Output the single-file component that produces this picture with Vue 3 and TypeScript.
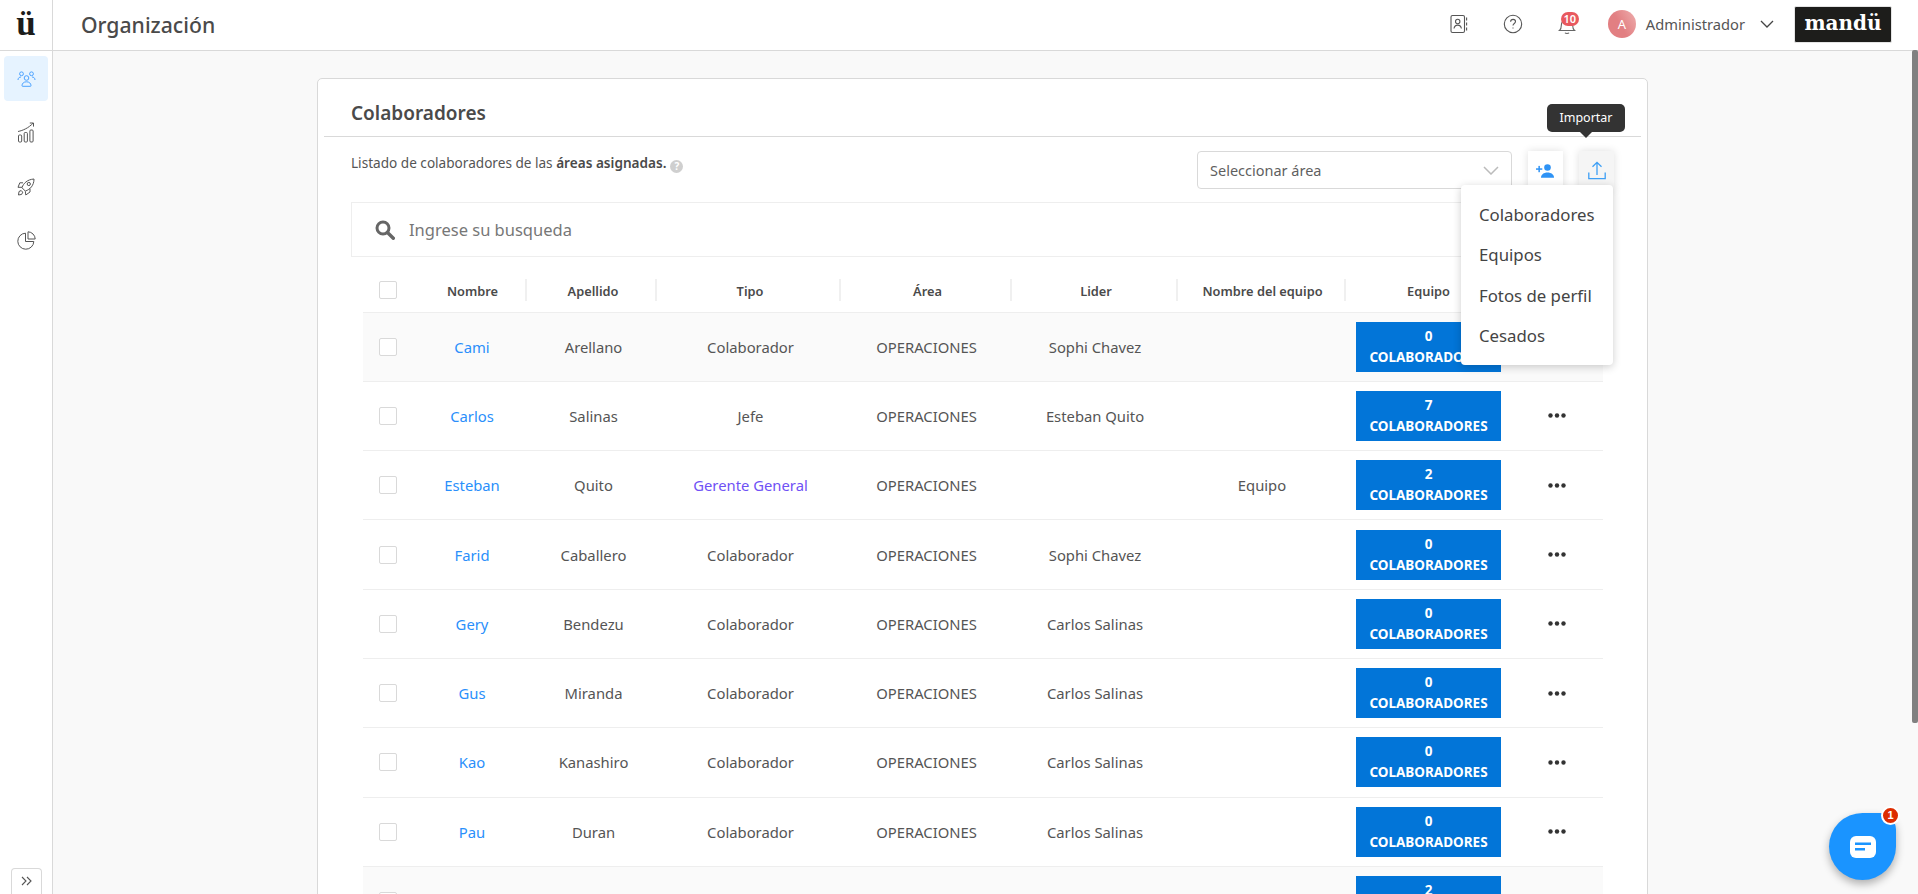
<script setup lang="ts">
interface Row {
  name: string
  last: string
  type: string
  area: string
  leader: string
  team: string
  count: number
  tinted?: boolean
}

const columns: string[] = ['Nombre', 'Apellido', 'Tipo', 'Área', 'Lider', 'Nombre del equipo', 'Equipo']
const menuItems: string[] = ['Colaboradores', 'Equipos', 'Fotos de perfil', 'Cesados']

const rows: Row[] = [
  { name: 'Cami', last: 'Arellano', type: 'Colaborador', area: 'OPERACIONES', leader: 'Sophi Chavez', team: '', count: 0, tinted: true },
  { name: 'Carlos', last: 'Salinas', type: 'Jefe', area: 'OPERACIONES', leader: 'Esteban Quito', team: '', count: 7 },
  { name: 'Esteban', last: 'Quito', type: 'Gerente General', area: 'OPERACIONES', leader: '', team: 'Equipo', count: 2 },
  { name: 'Farid', last: 'Caballero', type: 'Colaborador', area: 'OPERACIONES', leader: 'Sophi Chavez', team: '', count: 0 },
  { name: 'Gery', last: 'Bendezu', type: 'Colaborador', area: 'OPERACIONES', leader: 'Carlos Salinas', team: '', count: 0 },
  { name: 'Gus', last: 'Miranda', type: 'Colaborador', area: 'OPERACIONES', leader: 'Carlos Salinas', team: '', count: 0 },
  { name: 'Kao', last: 'Kanashiro', type: 'Colaborador', area: 'OPERACIONES', leader: 'Carlos Salinas', team: '', count: 0 },
  { name: 'Pau', last: 'Duran', type: 'Colaborador', area: 'OPERACIONES', leader: 'Carlos Salinas', team: '', count: 0 },
  { name: '', last: '', type: '', area: '', leader: '', team: '', count: 2, tinted: true },
]
</script>

<template>
  <div class="app">
    <header class="topbar">
      <div class="logo-cell"><span class="logo">ü</span></div>
      <h1 class="page-title">Organización</h1>
      <div class="top-actions">
        <svg class="ti book" viewBox="0 0 20 20" fill="none" stroke="#555" stroke-width="1.1">
          <rect x="2" y="1.5" width="13.5" height="17" rx="1.5" />
          <circle cx="8.7" cy="7.5" r="2.2" />
          <path d="M5 14.5c.4-2.6 2-3.4 3.7-3.4s3.3.8 3.7 3.4" />
          <path d="M17.6 3.5v3M17.6 8.5v3M17.6 13.5v3" />
        </svg>
        <svg class="ti help" viewBox="0 0 20 20" fill="none" stroke="#555" stroke-width="1.1">
          <circle cx="10" cy="10" r="8.7" />
          <path d="M7.6 7.8c0-1.5 1.1-2.4 2.5-2.4s2.4.9 2.4 2.2c0 1.9-2.5 1.9-2.5 4" />
          <path d="M10 13.4v1.2" />
        </svg>
        <div class="bell">
          <svg class="ti" viewBox="0 0 20 20" fill="none" stroke="#666" stroke-width="1.1">
            <path d="M2.5 15.5c1.3-1 1.8-2.3 1.8-5 0-3.400 2.400-6 5.700-6s5.700 2.600 5.700 6c0 2.700.5 4 1.800 5z" />
            <path d="M8 17.800c.6 1 3.400 1 4 0" />
          </svg>
          <span class="bell-count">10</span>
        </div>
        <div class="user">
          <span class="avatar">A</span>
          <span class="user-name">Administrador</span>
          <svg class="user-chev" viewBox="0 0 14 8" fill="none" stroke="#444" stroke-width="1.300">
            <path d="M1 1l6 6 6-6" />
          </svg>
        </div>
        <div class="brand">mandü</div>
      </div>
    </header>

    <div class="body">
      <aside class="sidebar">
        <nav class="side-nav">
          <a class="side-item active">
            <svg width="19" height="16" viewBox="0 0 19 16" fill="none" stroke="#4da3ff" stroke-width="1">
              <circle cx="4.500" cy="2.800" r="1.900" />
              <circle cx="14.500" cy="2.800" r="1.900" />
              <circle cx="9.500" cy="7" r="2.300" />
              <path d="M1 9c0-2 1.300-3 3-3M18 9c0-2-1.300-3-3-3" />
              <path d="M5 14.800c0-2.500 1.800-4 4.500-4s4.500 1.500 4.500 4c0 .3-.2.5-.5.5h-8c-.3 0-.5-.2-.5-.5z" />
            </svg>
          </a>
          <a class="side-item">
            <svg width="18" height="21" viewBox="0 0 18 21" fill="none" stroke="#555" stroke-width="1">
              <rect x="1.500" y="13" width="3.200" height="7" rx="1" />
              <rect x="7.200" y="10.500" width="3.200" height="9.500" rx="1" />
              <rect x="12.900" y="8" width="3.200" height="12" rx="1" />
              <path d="M1 9.500C6 8.500 11.500 6 16 1.200" />
              <path d="M12.800 1h3.700v3.600" />
            </svg>
          </a>
          <a class="side-item">
            <svg width="18" height="18" viewBox="0 0 18 18" fill="none" stroke="#555" stroke-width="1">
              <path d="M6.500 11.500L5 9.500c1.500-4 5-8 12-8.500 0 6.500-4 10.500-8.500 12z" />
              <circle cx="11.800" cy="6" r="1.600" />
              <path d="M6 4.800H2.800L1 9.300h4M13 10.500v3.500L8.800 17l-.5-3.700" />
              <path d="M1.500 17l.5-3.500 2.200-1 1.500 1.700-1 2.200z" />
            </svg>
          </a>
          <a class="side-item">
            <svg width="19" height="19" viewBox="0 0 19 19" fill="none" stroke="#555" stroke-width="1">
              <path d="M8.500 2.200a8 8 0 1 0 8.300 8.300H8.500z" />
              <path d="M11 .8a7.500 7.500 0 0 1 7.200 7.200H11z" />
            </svg>
          </a>
        </nav>
        <button class="collapse" type="button">
          <svg width="11" height="10" viewBox="0 0 11 10" fill="none" stroke="#555" stroke-width="1.100">
            <path d="M1 1l4 4-4 4M6 1l4 4-4 4" />
          </svg>
        </button>
      </aside>

      <main class="main">
        <section class="card">
          <div class="card-head"><h2>Colaboradores</h2></div>
          <div class="card-body">
            <div class="toolbar">
              <p class="intro">
                Listado de colaboradores de las <b>áreas asignadas.</b>
                <span class="q">?</span>
              </p>
              <div class="tools">
                <div class="select">
                  <span>Seleccionar área</span>
                  <svg width="16" height="9" viewBox="0 0 16 9" fill="none" stroke="#bbb" stroke-width="1.500">
                    <path d="M1 1l7 7 7-7" />
                  </svg>
                </div>
                <button class="tool" type="button">
                  <svg width="19" height="14" viewBox="0 0 19 14" fill="#2f93f5">
                    <circle cx="11.500" cy="3.500" r="3.300" />
                    <path d="M5 13.800c0-3 2.700-5.200 6.500-5.200s6.500 2.200 6.500 5.200z" />
                    <rect x="0" y="4.300" width="6.300" height="1.500" />
                    <rect x="2.400" y="1.900" width="1.500" height="6.300" />
                  </svg>
                </button>
                <div class="import">
                  <button class="tool pressed" type="button">
                    <svg width="18" height="19" viewBox="0 0 18 19" fill="none" stroke="#3e9ff5" stroke-width="1.300">
                      <path d="M9 14V1.500M4.500 5.800L9 1.300l4.500 4.500" />
                      <path d="M.8 11.500v6.200h16.400v-6.200" />
                    </svg>
                  </button>
                  <div class="tooltip">Importar</div>
                  <ul class="menu">
                    <li v-for="item in menuItems" :key="item">{{ item }}</li>
                  </ul>
                </div>
              </div>
            </div>

            <div class="search">
              <svg width="20" height="20" viewBox="0 0 20 20" fill="none" stroke="#666" stroke-width="3">
                <circle cx="8" cy="8" r="6" />
                <path d="M12.500 12.500l5.800 5.800" stroke-width="3.400" stroke-linecap="round" />
              </svg>
              <span>Ingrese su busqueda</span>
            </div>

            <div class="table">
              <div class="tr th-row">
                <div class="cell-check"><span class="check"></span></div>
                <div v-for="col in columns" :key="col" class="th">{{ col }}</div>
                <div></div>
              </div>
              <div v-for="(row, i) in rows" :key="i" class="tr" :class="{ tinted: row.tinted }">
                <div class="cell-check"><span class="check"></span></div>
                <div class="td link">{{ row.name }}</div>
                <div class="td shifted">{{ row.last }}</div>
                <div class="td shifted" :class="{ purple: row.type === 'Gerente General' }">{{ row.type }}</div>
                <div class="td">{{ row.area }}</div>
                <div class="td">{{ row.leader }}</div>
                <div class="td">{{ row.team }}</div>
                <div class="td">
                  <div class="count"><span>{{ row.count }}</span><span>COLABORADORES</span></div>
                </div>
                <div class="td">
                  <svg width="18" height="5" viewBox="0 0 18 5" fill="#333">
                    <circle cx="2.500" cy="2.500" r="2.200" />
                    <circle cx="9" cy="2.500" r="2.200" />
                    <circle cx="15.500" cy="2.500" r="2.200" />
                  </svg>
                </div>
              </div>
            </div>
          </div>
        </section>
      </main>
    </div>

    <div class="scroll-thumb"></div>

    <button class="chat" type="button">
      <svg width="26" height="22" viewBox="0 0 26 22">
        <rect x="0" y="0" width="26" height="22" rx="6" fill="#fff" />
        <rect x="5" y="6.500" width="16" height="2.500" fill="#1a94ff" />
        <rect x="5" y="12" width="10" height="2.500" fill="#1a94ff" />
      </svg>
      <span class="chat-badge">1</span>
    </button>
  </div>
</template>

<style scoped>
.app {
  position: relative;
  height: 100vh;
  overflow: hidden;
  display: flex;
  flex-direction: column;
  background: #f9f9f9;
  color: #4f4f4f;
  font-family: "Noto Sans", "Open Sans", sans-serif;
  font-size: 14px;
}
.topbar {
  flex: none;
  height: 51px;
  box-sizing: border-box;
  display: flex;
  align-items: center;
  background: #fff;
  border-bottom: 1px solid #d9d9d9;
}
.logo-cell {
  width: 53px;
  height: 100%;
  box-sizing: border-box;
  border-right: 1px solid #d9d9d9;
  display: flex;
  align-items: center;
  justify-content: center;
}
.logo {
  font-family: "Liberation Serif", serif;
  font-weight: 700;
  font-size: 35px;
  line-height: 1;
  color: #1c1c1a;
  margin-top: -4px;
}
.page-title {
  margin: 0 0 2px 28px;
  font-size: 21.200px;
  font-weight: 500;
  color: #4a4a4a;
}
.top-actions {
  margin-left: auto;
  margin-bottom: 2px;
  display: flex;
  align-items: center;
  padding-right: 26px;
}
.ti {
  width: 20px;
  height: 20px;
  display: block;
}
.help {
  margin-left: 34px;
}
.bell {
  position: relative;
  margin-left: 34px;
  margin-top: 2px;
}
.bell-count {
  position: absolute;
  left: 4px;
  top: -3px;
  width: 18px;
  height: 14px;
  border-radius: 7px;
  background: #e8595f;
  color: #fff;
  font-size: 11px;
  line-height: 14px;
  font-weight: 600;
  text-align: center;
}
.user {
  display: flex;
  align-items: center;
  margin-left: 31px;
}
.avatar {
  width: 28px;
  height: 28px;
  border-radius: 50%;
  background: linear-gradient(60deg, #e27f82 45%, #eeaeae 100%);
  color: #fff;
  display: flex;
  align-items: center;
  justify-content: center;
  font-size: 13px;
}
.user-name {
  margin-left: 10px;
  font-size: 14.700px;
  color: #555;
}
.user-chev {
  width: 14px;
  height: 8px;
  margin-left: 15px;
}
.brand {
  margin-left: 20px;
  width: 98px;
  height: 37px;
  box-sizing: border-box;
  background: #1d1d1b;
  border: 1px solid #e4e4e4;
  border-radius: 2px;
  color: #fff;
  font-family: "DejaVu Serif", serif;
  font-weight: 700;
  font-size: 20px;
  line-height: 33px;
  text-align: center;
}
.body {
  flex: 1;
  min-height: 0;
  display: flex;
}
.sidebar {
  flex: none;
  width: 53px;
  box-sizing: border-box;
  background: #fff;
  border-right: 1px solid #d9d9d9;
  display: flex;
  flex-direction: column;
  align-items: center;
  padding-top: 5px;
}
.side-nav {
  display: flex;
  flex-direction: column;
  gap: 9px;
}
.side-item {
  width: 44px;
  height: 45px;
  border-radius: 4px;
  display: flex;
  align-items: center;
  justify-content: center;
}
.side-item.active {
  background: #e6f3ff;
}
.collapse {
  margin-top: auto;
  width: 31px;
  height: 26px;
  padding: 0 0 2px;
  background: #fff;
  border: 1px solid #d9d9d9;
  border-bottom: 0;
  border-radius: 4px 4px 0 0;
  display: flex;
  align-items: center;
  justify-content: center;
}
.main {
  flex: 1;
  min-width: 0;
  overflow: hidden;
  padding: 27px 6px 0 0;
}
.card {
  width: 1331px;
  box-sizing: border-box;
  margin: 0 auto;
  background: #fff;
  border: 1px solid #d9d9d9;
  border-radius: 5px;
}
.card-head {
  margin: 0 6px;
  height: 58px;
  box-sizing: border-box;
  border-bottom: 1px solid #d9d9d9;
  padding: 21px 0 0 27px;
}
.card-head h2 {
  margin: 0;
  font-size: 19px;
  line-height: 26px;
  font-weight: 600;
  color: #4a4a4a;
}
.card-body {
  padding: 0 34px 40px 33px;
}
.toolbar {
  height: 65px;
  display: flex;
  justify-content: space-between;
  padding-top: 14px;
  box-sizing: border-box;
}
.intro {
  margin: 2px 0 0;
  font-size: 13.600px;
  line-height: 20px;
  color: #555;
}
.intro b {
  font-weight: 600;
  color: #4a4a4a;
}
.q {
  display: inline-block;
  width: 13px;
  height: 13px;
  margin-left: 4px;
  border-radius: 50%;
  background: #cfcfcf;
  color: #fff;
  font-size: 10px;
  line-height: 13px;
  font-weight: 700;
  text-align: center;
  vertical-align: -2px;
}
.tools {
  display: flex;
  align-items: flex-start;
  margin-right: -1px;
}
.select {
  width: 315px;
  height: 38px;
  box-sizing: border-box;
  border: 1px solid #d9d9d9;
  border-radius: 4px;
  padding: 0 12px;
  display: flex;
  align-items: center;
  justify-content: space-between;
  font-size: 14.500px;
  color: #5f5f5f;
}
.tool {
  width: 35px;
  height: 39px;
  padding: 0;
  border: 0;
  background: #fff;
  box-shadow: 0 0 8px rgba(0, 0, 0, 0.13);
  display: flex;
  align-items: center;
  justify-content: center;
}
.select + .tool {
  margin-left: 16px;
}
.pressed {
  background: #f5f5f5;
}
.import {
  position: relative;
  margin-left: 16px;
}
.tooltip {
  position: absolute;
  left: -32px;
  top: -47px;
  width: 78px;
  height: 28px;
  border-radius: 5px;
  background: #333;
  color: #fff;
  font-size: 12.500px;
  line-height: 28px;
  text-align: center;
}
.tooltip::after {
  content: "";
  position: absolute;
  left: 33px;
  top: 28px;
  border: 6px solid transparent;
  border-top-color: #333;
  border-bottom: 0;
}
.menu {
  position: absolute;
  right: 1px;
  top: 34px;
  z-index: 2;
  width: 152px;
  box-sizing: border-box;
  margin: 0;
  padding: 9px 0;
  list-style: none;
  background: #fff;
  border-radius: 4px;
  box-shadow: 0 2px 8px rgba(0, 0, 0, 0.2);
}
.menu li {
  height: 40.400px;
  line-height: 41px;
  padding-left: 18px;
  font-size: 16.800px;
  color: #444;
}
.search {
  height: 55px;
  box-sizing: border-box;
  border: 1px solid #eee;
  display: flex;
  align-items: center;
  padding-left: 23px;
  gap: 14px;
  font-size: 16.500px;
  color: #777;
}
.table {
  margin: 0 10px 0 12px;
}
.tr {
  display: grid;
  grid-template-columns: 54px 110px 130px 184px 171px 166px 168px 165px 92px;
  height: 69.300px;
  box-sizing: border-box;
  border-bottom: 1px solid #eee;
  align-items: center;
}
.tr.tinted {
  background: #fafafa;
}
.th-row {
  height: 55.500px;
  padding-top: 11px;
}
.cell-check {
  padding-left: 16px;
  display: flex;
}
.check {
  width: 18px;
  height: 18px;
  box-sizing: border-box;
  border: 1px solid #d9d9d9;
  border-radius: 2px;
  background: #fff;
}
.th {
  height: 22px;
  box-sizing: border-box;
  padding-left: 4px;
  line-height: 24px;
  border-right: 2px solid #f0f0f0;
  text-align: center;
  font-size: 12.800px;
  font-weight: 600;
  color: #4a4a4a;
}
.th:nth-child(2),
.th:nth-child(7) {
  padding-left: 3px;
}
.th:nth-child(8) {
  padding-left: 0;
  border-right: 0;
}
.td {
  display: flex;
  align-items: center;
  justify-content: center;
  text-align: center;
  font-size: 14.800px;
  color: #555;
}
.td.shifted {
  padding-left: 3px;
}
.link {
  color: #2a8ffb;
}
.td.purple {
  color: #6f51f5;
}
.td.link {
  color: #2a8ffb;
}
.count {
  width: 145px;
  height: 50px;
  background: #0275d8;
  color: #fff;
  display: flex;
  flex-direction: column;
  align-items: center;
  justify-content: center;
  font-size: 13.500px;
  line-height: 21px;
  font-weight: 700;
}
.scroll-thumb {
  position: absolute;
  right: 0;
  top: 50px;
  width: 6px;
  height: 673px;
  border-radius: 2px;
  background: #808080;
}
.chat {
  position: absolute;
  left: 1829px;
  top: 813px;
  width: 67px;
  height: 67px;
  padding: 0;
  border: 0;
  border-radius: 50% 25% 50% 50%;
  background: #1a94ff;
  box-shadow: 0 4px 8px rgba(0, 0, 0, 0.3);
  display: flex;
  align-items: center;
  justify-content: center;
}
.chat-badge {
  position: absolute;
  right: -4px;
  top: -7px;
  width: 19px;
  height: 19px;
  box-sizing: border-box;
  border: 2px solid #fff;
  border-radius: 50%;
  background: #dd2c00;
  color: #fff;
  font-size: 11px;
  line-height: 15px;
  font-weight: 700;
  text-align: center;
}
</style>
